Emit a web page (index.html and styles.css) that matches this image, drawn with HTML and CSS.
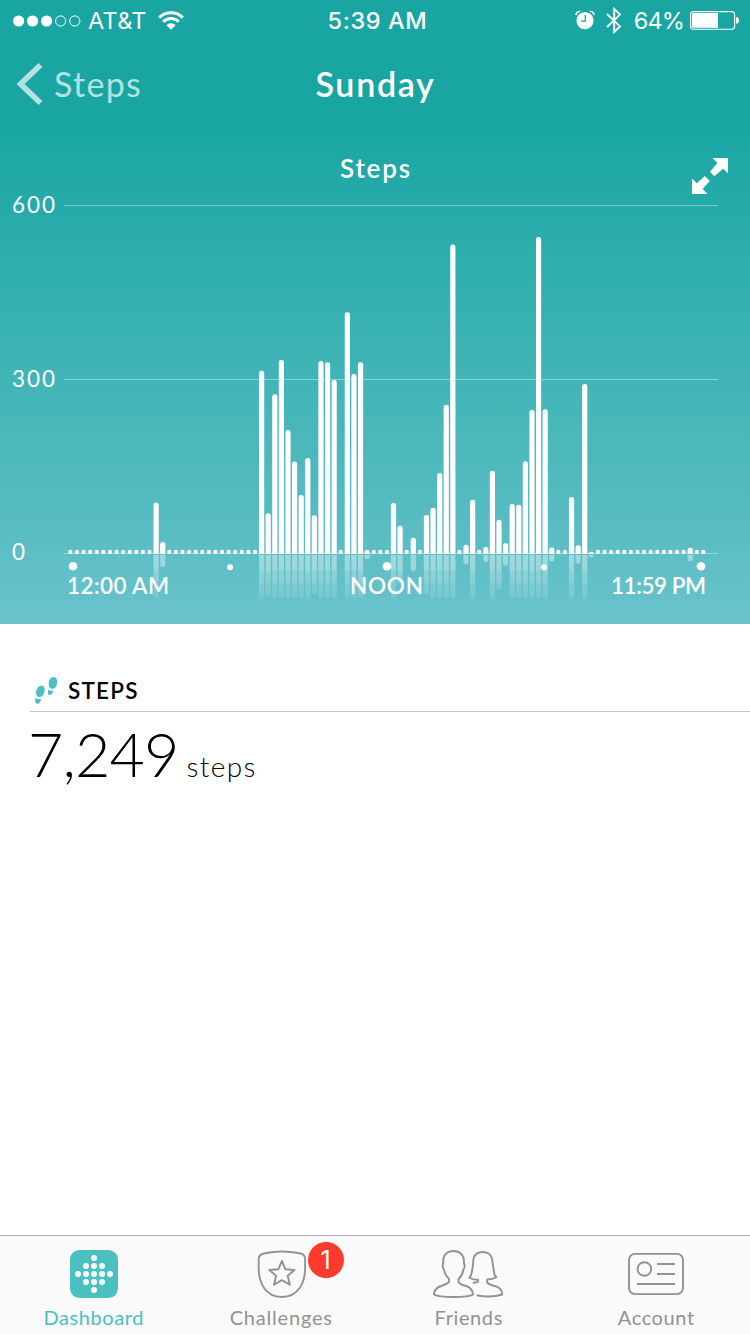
FILE: index.html
```html
<!DOCTYPE html>
<html lang="en">
<head>
<meta charset="utf-8">
<title>Sunday Steps</title>
<link rel="stylesheet" href="styles.css">
</head>
<body>
<div class="app">
  <header class="hero">
    <div class="status">
      <div class="status-left">
        <svg class="signal" width="68" height="12" viewBox="0 0 68 12">
          <g fill="#fff"><circle cx="5.6" cy="6" r="5.6"/><circle cx="19.6" cy="6" r="5.6"/><circle cx="33.6" cy="6" r="5.6"/></g>
          <g fill="none" stroke="#fff"><circle cx="47.6" cy="6" r="5.1"/><circle cx="61.8" cy="6" r="5.1"/></g>
        </svg>
        <span class="carrier">AT&amp;T</span>
        <svg class="wifi" width="26" height="19" viewBox="0 0 26 19">
          <g fill="none" stroke="#fff" stroke-width="3"><path d="M1.2 6.6A16.8 16.8 0 0 1 24.8 6.6"/><path d="M5.2 10.8A11 11 0 0 1 20.8 10.8"/></g>
          <path d="M8.4 14.2A6.5 6.5 0 0 1 17.6 14.2L13 18.7Z" fill="#fff"/>
        </svg>
      </div>
      <div class="clock">5:39 AM</div>
      <div class="status-right">
        <svg class="alarm" width="20" height="20" viewBox="0 0 20 20">
          <circle cx="10" cy="10.6" r="8.6" fill="#fff"/>
          <path d="M.8 5.2Q1.4 1.6 5.2 1.3M19.2 5.2Q18.6 1.6 14.8 1.3" fill="none" stroke="#fff" stroke-width="1.5"/>
          <path d="M10.3 5V11.2H6" fill="none" stroke="#19a6a3" stroke-width="1.3"/>
        </svg>
        <svg class="bluetooth" width="16" height="27" viewBox="0 0 16 27">
          <path d="M1 7L14 19.4L8.2 25V2L14 7.6L1 20" fill="none" stroke="#fff" stroke-width="1.9"/>
        </svg>
        <span class="percent">64%</span>
        <svg class="battery" width="50" height="20" viewBox="0 0 50 20">
          <rect x=".6" y="1.6" width="44" height="17.6" rx="3" fill="none" stroke="#fff" stroke-width="1.1"/>
          <path d="M3.5 3.1H28V17.7H3.5Q2 17.7 2 16.2V4.6Q2 3.1 3.5 3.1Z" fill="#fff"/>
          <path d="M46 7Q49 7.4 49 10.4T46 13.8Z" fill="#fff"/>
        </svg>
      </div>
    </div>
    <nav class="nav">
      <div class="back">
        <svg width="26" height="42" viewBox="0 0 26 42"><path d="M23.5 2L3.6 21L23.5 40" fill="none" stroke="#b3e0e0" stroke-width="5.6"/></svg>
        <span class="back-label">Steps</span>
      </div>
      <h1 class="title">Sunday</h1>
      <div></div>
    </nav>
    <svg class="chart" width="750" height="496" viewBox="0 128 750 496">
      <defs>
        <linearGradient id="fade" gradientUnits="userSpaceOnUse" x1="0" y1="555" x2="0" y2="607">
          <stop offset="0" stop-color="#fff" stop-opacity=".42"/>
          <stop offset=".3" stop-color="#fff" stop-opacity=".36"/>
          <stop offset=".31" stop-color="#fff" stop-opacity=".28"/>
          <stop offset=".54" stop-color="#fff" stop-opacity=".24"/>
          <stop offset=".55" stop-color="#fff" stop-opacity=".18"/>
          <stop offset=".8" stop-color="#fff" stop-opacity=".13"/>
          <stop offset=".82" stop-color="#fff" stop-opacity=".04"/>
          <stop offset="1" stop-color="#fff" stop-opacity=".01"/>
        </linearGradient>
        <clipPath id="floor"><rect x="60" y="555" width="665" height="52"/></clipPath>
        <clipPath id="plot"><rect x="60" y="200" width="665" height="354"/></clipPath>
      </defs>
      <g class="grid"><path d="M64 205.5H718M64 379.5H718M64 553.5H718"/></g>
      <g id="reflections" clip-path="url(#floor)" fill="url(#fade)"></g>
      <g id="bars" clip-path="url(#plot)" fill="#fff"></g>
      <g fill="#fff"><circle cx="73" cy="566.3" r="4.3"/><circle cx="230" cy="567.3" r="3"/><circle cx="387" cy="566.3" r="4.3"/><circle cx="544" cy="567.3" r="3"/><circle cx="701" cy="566.3" r="4.3"/></g>
      <g class="axis">
        <text x="12" y="213" textLength="43">600</text>
        <text x="12" y="387" textLength="43">300</text>
        <text x="12" y="560" textLength="14">0</text>
      </g>
      <g class="hours">
        <text x="67" y="594" textLength="102">12:00 AM</text>
        <text x="350" y="594" textLength="73">NOON</text>
        <text x="611" y="594" textLength="95">11:59 PM</text>
      </g>
      <text class="chart-title" x="340" y="178" textLength="70">Steps</text>
      <g fill="#fff">
        <path d="M712.5 158H728V173.5L723.2 168.8L714.3 176.2L710 171.8L717.4 163Z"/>
        <path d="M692 178.5L696.8 183.2L704.8 176L709.8 181L702.6 189L707.5 194H692Z"/>
      </g>
    </svg>
  </header>
  <main class="details">
    <div class="section-head">
      <svg class="feet" width="24" height="28" viewBox="0 0 24 28" fill="#4ac0c1">
        <path d="M18.5 0C21.5 0 22.6 3 22 6.5C21.5 9 20.5 11.8 17.5 11.8C14.3 11.8 13.4 8.5 13.8 5.5C14.2 2.3 15.8 0 18.5 0Z"/>
        <path d="M13.1 12.8Q15.6 14.1 18.2 13.6Q17.6 18 14.7 18Q12 18 13.1 12.8Z"/>
        <path d="M6.5 8.7C9.2 8.7 10.2 11.2 9.5 14.3C9 17 7.6 20.2 4.5 20C1.7 19.8 .7 17.3 1.2 14.5C1.7 11.5 3.2 8.7 6.5 8.7Z"/>
        <path d="M.4 21Q3.2 22.5 5.9 22.1Q5.6 26.8 2.5 26.8Q-.6 26.8 .4 21Z"/>
      </svg>
      <h2 class="section-title">STEPS</h2>
    </div>
    <div class="total"><span class="total-value">7,249</span><span class="total-unit">steps</span></div>
  </main>
  <footer class="tabs">
    <div class="tab tab-active">
      <svg width="72" height="52" viewBox="0 0 72 52">
        <rect x="12" y="2" width="48" height="48" rx="9.5" fill="#4ac0c1"/>
        <g fill="#fafafa"><circle cx="36" cy="10" r="3"/><circle cx="28" cy="18" r="3"/><circle cx="36" cy="18" r="3"/><circle cx="44" cy="18" r="3"/><circle cx="20" cy="26" r="3"/><circle cx="28" cy="26" r="3"/><circle cx="36" cy="26" r="3"/><circle cx="44" cy="26" r="3"/><circle cx="52" cy="26" r="3"/><circle cx="28" cy="34" r="3"/><circle cx="36" cy="34" r="3"/><circle cx="44" cy="34" r="3"/><circle cx="36" cy="42" r="3"/></g>
      </svg>
      <span class="label label-dashboard">Dashboard</span>
    </div>
    <div class="tab">
      <svg class="line" width="72" height="52" viewBox="-.8 0 72 52">
        <path d="M19 5.3Q36 1.8 54 5.3Q59.3 6.3 59.3 11V20C59.3 34 53 49 36 49S12.9 34 12.9 20V11Q13 6.3 19 5.3Z"/>
        <path d="M36 13L39.6 21.2L48.7 22L41.9 27.8L44.1 36.8L36 32.1L28.2 36.8L30.3 27.8L23.5 22L32.6 21.2Z"/>
      </svg>
      <span class="label label-challenges">Challenges</span>
      <span class="badge">1</span>
    </div>
    <div class="tab">
      <svg class="line" width="72" height="52" viewBox=".9 0 72 52">
        <path d="M21.5 3C28 3 31.8 7.5 31.8 12.5V15Q33.5 18.5 31.2 22Q30.5 27 26.5 31.2V34.5Q29 37 34 38Q40.5 40.5 41 46.5Q37 49 21.5 49Q6 49 1.8 46.5Q2.5 40 9 38Q14.5 36.5 17 34V31.2Q12.5 26.5 12 22Q9.6 18.5 11.2 15V12.5C11.2 7 15 3 21.5 3Z"/>
        <path d="M44.5 47.2Q59 50 70.2 46.5Q70 40.5 63.5 38.2Q57.5 37 55 34.5V31.5Q60.5 31.5 64.2 29.2L62.5 27Q60.8 18 60.2 12C59.5 6.8 55.5 4 50.8 4C45.5 4 41.8 7 41.2 12Q41 20 39 27L37.3 29.7Q40.5 31.8 46 31.7V33.5Q44 35 40.8 34.7"/>
      </svg>
      <span class="label label-friends">Friends</span>
    </div>
    <div class="tab">
      <svg class="line" width="72" height="52" viewBox="0 0 72 52">
        <rect x="9" y="5.9" width="54" height="40.2" rx="6"/>
        <circle cx="24.4" cy="21" r="6.8"/>
        <path d="M37 16H55M37 26H55M17 36H55"/>
      </svg>
      <span class="label label-account">Account</span>
    </div>
  </footer>
</div>
<script src="chart.js"></script>
</body>
</html>
```
FILE: styles.css
```css
* { box-sizing: border-box; }
body { margin: 0; background: #fff; font-family: Lato, "Open Sans", sans-serif; }
.app { width: 750px; height: 1334px; display: flex; flex-direction: column; overflow: hidden; }
.hero { height: 624px; color: #fff; background: linear-gradient(#19a6a3 0, #19a6a3 125px, #54bbc0 500px, #6ac3cc 624px); }
.status { height: 40px; display: grid; grid-template-columns: 1fr auto 1fr; align-items: center; font-family: Inter, "Liberation Sans", sans-serif; font-size: 23.5px; line-height: 38px; padding: 1px 10px 0 13px; }
.status-left, .status-right { display: flex; align-items: center; }
.status-right { justify-content: flex-end; }
.status span, .clock { padding-top: 1px; }
.carrier { margin-left: 7px; font-weight: 400; letter-spacing: 0.3px; }
.wifi { margin: -1px 0 0 11px; }
.clock { font-weight: 500; letter-spacing: 0.6px; margin-left: 2px; }
.alarm { margin: -1px 11px 0 0; }
.bluetooth { margin-right: 12px; }
.percent { font-weight: 400; margin-right: 6px; letter-spacing: -0.9px; }
.battery { margin-top: -2px; }
.nav { height: 88px; display: grid; grid-template-columns: 1fr auto 1fr; align-items: center; padding: 0 16px 0 17px; }
.back { display: flex; align-items: center; color: #b3e0e0; }
.back-label { margin-left: 11px; font-size: 34px; font-weight: 400; line-height: 40px; letter-spacing: 1.3px; }
.title { margin: 0; font-family: "Lato Semibold", Lato, sans-serif; font-size: 34px; font-weight: 600; line-height: 40px; letter-spacing: 1.7px; }
.chart { display: block; }
.grid path { fill: none; stroke: #fff; stroke-opacity: 0.38; stroke-width: 1; }
.axis text { font-size: 22.5px; fill: #fff; }
.hours text { font-family: "Lato Semibold", Lato, sans-serif; font-size: 22.5px; font-weight: 600; fill: #fff; }
.chart-title { font-family: "Lato Semibold", Lato, sans-serif; font-size: 26px; font-weight: 600; fill: #fff; }
.details { flex: 1; padding-left: 30px; }
.section-head { height: 88px; display: flex; align-items: flex-end; gap: 9px; padding: 0 0 7px 5px; border-bottom: 1px solid #c8c8c8; }
.feet { margin-bottom: -1px; }
.section-title { margin: 0; font-family: "Lato Semibold", Lato, sans-serif; font-size: 22.5px; line-height: 27px; font-weight: 600; letter-spacing: 1.2px; color: #000; }
.total { display: flex; align-items: baseline; color: #000; font-weight: 300; line-height: 83px; margin-left: -2px; }
.total-value { font-size: 61px; letter-spacing: -0.9px; }
.total-unit { font-size: 28px; margin-left: 8px; letter-spacing: 1.4px; }
.tabs { height: 99px; display: grid; grid-template-columns: repeat(4, 1fr); background: #fafafa; border-top: 1px solid #acacac; color: #929292; }
.tab { position: relative; display: flex; flex-direction: column; align-items: center; padding-top: 12px; }
.tab-active { color: #4ac0c1; }
.line { fill: none; stroke: #929292; stroke-width: 1.9; stroke-linejoin: round; }
.label { font-size: 20px; line-height: 24px; margin-top: 5px; letter-spacing: 0.6px; }
.label-challenges { letter-spacing: 0.8px; }
.badge { position: absolute; left: 120px; top: 6px; width: 36px; height: 36px; border-radius: 50%; background: #ff3b30; color: #fff; font: 400 25px/36px Inter, sans-serif; text-align: center; }
```
FILE: chart.js
```js
// Bar tops for each quarter-hour slot; slots without an entry hold no steps.
const tops = {
  13: 502.5, 14: 542, 29: 370.7, 30: 513.3, 31: 394.3, 32: 360, 33: 430,
  34: 461.5, 35: 495, 36: 458, 37: 515.3, 38: 361, 39: 362.3, 40: 380,
  42: 312.3, 43: 374, 44: 362.3, 45: 550, 49: 503, 50: 525.7, 52: 537.7,
  54: 515, 55: 507.7, 56: 473, 57: 404.7, 58: 244.5, 60: 544.7, 61: 499.7,
  63: 547, 64: 470.7, 65: 519.8, 66: 543.3, 67: 504, 68: 504.7, 69: 461.3,
  70: 410, 71: 237, 72: 409.3, 73: 547.5, 76: 497, 77: 545.3, 78: 384,
  79: 551.7, 94: 547.7
};
const base = 554;
const ns = "http://www.w3.org/2000/svg";
function add(parent, name, attrs) {
  const el = document.createElementNS(ns, name);
  for (const key in attrs) el.setAttribute(key, attrs[key]);
  parent.appendChild(el);
}
const bars = document.getElementById("bars");
const reflections = document.getElementById("reflections");
for (let i = 0; i <= 96; i++) {
  const x = 70.4 + i * 6.594;
  const top = tops[i];
  if (top === undefined) {
    add(bars, "circle", { cx: x, cy: 551.9, r: 2.1 });
    continue;
  }
  const h = base - top;
  add(bars, "rect", { x: x - 2.6, y: top, width: 5.2, height: h + 6, rx: 2.4 });
  add(reflections, "rect", { x: x - 2.6, y: base - 5, width: 5.2, height: h + 6, rx: 2.2 });
}
```
